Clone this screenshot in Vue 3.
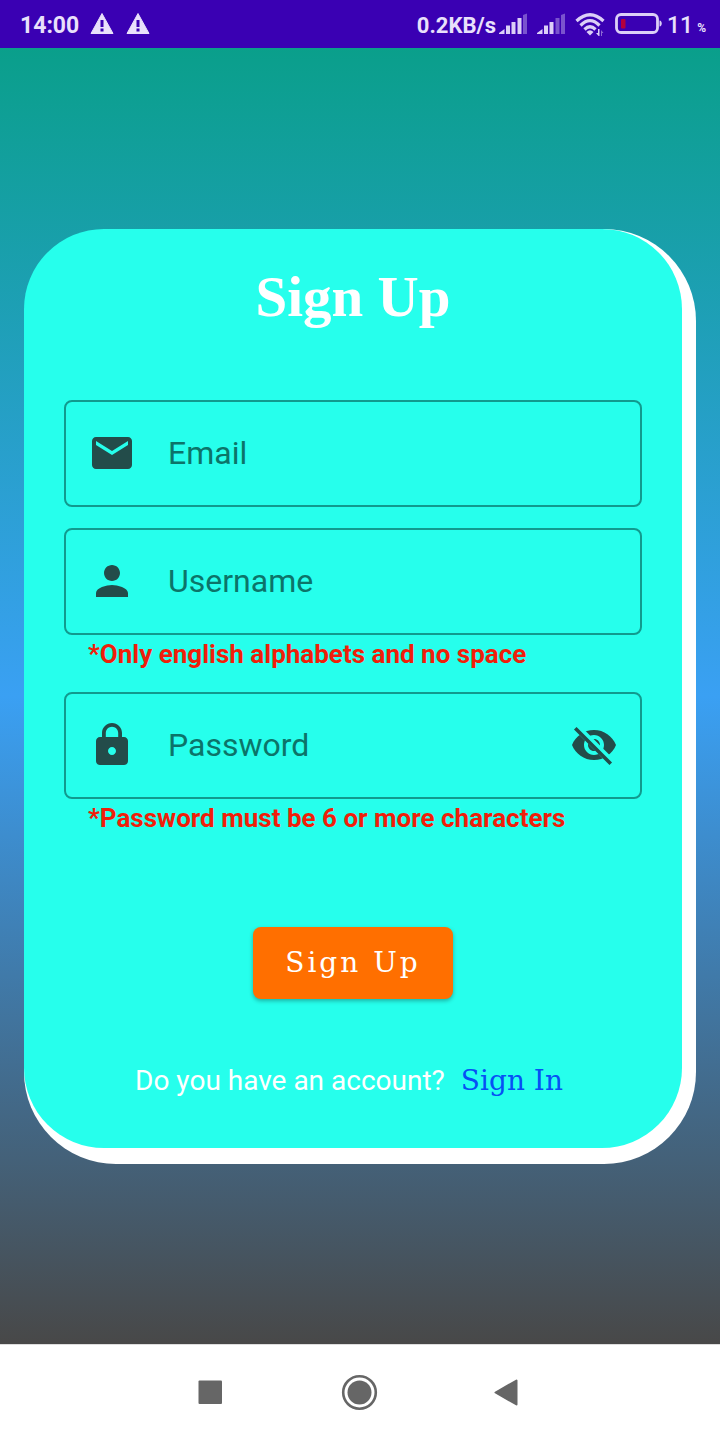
<script setup>
import { ref } from 'vue'

const email = ref('')
const username = ref('')
const password = ref('')
const showPassword = ref(false)
</script>

<template>
  <div class="screen">
    <header class="status">
      <div class="status-group left">
        <span class="clock">14:00</span>
        <svg v-for="n in 2" :key="n" class="warn" width="24" height="24" viewBox="0 0 24 24" aria-hidden="true">
          <path d="M12 1.500 23 21.500H1z" fill="#e9e0fb" stroke="#e9e0fb" stroke-linejoin="round" />
          <path d="M10.500 8h3v7h-3zM10.500 16.500h3v3h-3z" fill="#3a00b3" />
        </svg>
      </div>
      <div class="status-group right">
        <span class="speed">0.2KB/s</span>
        <svg class="signal" width="28" height="24" viewBox="0 0 28 24" aria-hidden="true">
          <g fill="#dccff7">
            <path d="M0 22v-1l5.500-4v5zM7 13.500h4V22H7zM12.500 10h4v12h-4zM18.500 6h4v16h-4z" />
            <path d="M24 3 28 1.500V22h-4z" opacity=".4" />
          </g>
        </svg>
        <svg class="signal" width="28" height="24" viewBox="0 0 28 24" aria-hidden="true">
          <g fill="#dccff7">
            <path d="M0 22v-1l5.500-4v5zM7 13.500h4V22H7zM12.500 10h4v12h-4z" />
            <path d="M18.500 6h4v16h-4zM24 3 28 1.500V22h-4z" opacity=".4" />
          </g>
        </svg>
        <svg class="wifi" width="30" height="24" viewBox="0 0 30 24" aria-hidden="true">
          <g fill="none" stroke="#dccff7" stroke-width="3.200">
            <path d="M1.500 9Q15-3.500 28.500 9" />
            <path d="M5.500 13.500Q15 4 24.500 13.500" />
            <path d="M9.500 17.500Q15 12 20.500 17.500" />
          </g>
          <path d="M11.500 20Q15 16.500 18.500 20L15 23.500z" fill="#dccff7" />
          <path d="M21 21h2v-4h1.500v8z" fill="#dccff7" />
          <path d="M26 18l2.500 3H27v3h-1z" fill="#8b68d3" />
        </svg>
        <svg class="battery" width="48" height="24" viewBox="0 0 48 24" aria-hidden="true">
          <rect x="1.500" y="2.500" width="41" height="18" rx="4.500" fill="none" stroke="#dccff7" stroke-width="2.800" />
          <rect x="6" y="7" width="4.500" height="9.500" rx="1" fill="#b3003c" />
          <path d="M44.500 8.500c3 0 3 6 0 6z" fill="#dccff7" />
        </svg>
        <span class="level">11</span>
        <span class="percent">%</span>
      </div>
    </header>

    <main class="stage">
      <div class="card">
        <form class="panel" @submit.prevent>
          <h1>Sign Up</h1>

          <div class="fields">
            <div class="field">
              <svg width="48" height="48" viewBox="0 0 24 24" aria-hidden="true">
                <path d="M20 4H4c-1.100 0-1.990.9-1.990 2L2 18c0 1.100.9 2 2 2h16c1.100 0 2-.9 2-2V6c0-1.100-.9-2-2-2zm0 4l-8 5-8-5V6l8 5 8-5v2z" />
              </svg>
              <input v-model="email" type="email" placeholder="Email" aria-label="Email" />
            </div>

            <div>
              <div class="field">
                <svg width="48" height="48" viewBox="0 0 24 24" aria-hidden="true">
                  <path d="M12 12c2.210 0 4-1.790 4-4s-1.790-4-4-4-4 1.790-4 4 1.790 4 4 4zm0 2c-2.670 0-8 1.340-8 4v2h16v-2c0-2.660-5.330-4-8-4z" />
                </svg>
                <input v-model="username" type="text" placeholder="Username" aria-label="Username" aria-describedby="username-hint" />
              </div>
              <p id="username-hint" class="hint">*Only english alphabets and no space</p>
            </div>

            <div>
              <div class="field">
                <svg width="48" height="48" viewBox="0 0 24 24" aria-hidden="true">
                  <path d="M18 8h-1V6c0-2.760-2.240-5-5-5S7 3.240 7 6v2H6c-1.100 0-2 .9-2 2v10c0 1.100.9 2 2 2h12c1.100 0 2-.9 2-2V10c0-1.100-.9-2-2-2zm-6 9c-1.100 0-2-.9-2-2s.9-2 2-2 2 .9 2 2-.9 2-2 2zm3.100-9H8.900V6c0-1.710 1.390-3.100 3.100-3.100s3.100 1.390 3.100 3.100v2z" />
                </svg>
                <input v-model="password" :type="showPassword ? 'text' : 'password'" placeholder="Password" aria-label="Password" aria-describedby="password-hint" />
                <button type="button" class="toggle" aria-label="Show password" :aria-pressed="showPassword" @click="showPassword = !showPassword">
                  <svg width="48" height="48" viewBox="0 0 24 24" aria-hidden="true">
                    <clipPath id="eye-clip">
                      <path d="M2 4.270 19.730 22 22.270 19.460 4.540 1.730V1H23V23H1V4.270Z" />
                    </clipPath>
                    <path :clip-path="showPassword ? null : 'url(#eye-clip)'" d="M12 4.500C7 4.500 2.730 7.610 1 12c1.730 4.390 6 7.500 11 7.500s9.270-3.110 11-7.500c-1.730-4.390-6-7.500-11-7.500zM12 17c-2.760 0-5-2.240-5-5s2.240-5 5-5 5 2.240 5 5-2.240 5-5 5zm0-8c-1.660 0-3 1.340-3 3s1.340 3 3 3 3-1.340 3-3-1.340-3-3-3z" />
                    <path v-if="!showPassword" d="M3.270 4.270 19.740 20.740" fill="none" stroke="#234c4a" stroke-width="1.800" stroke-linecap="square" />
                  </svg>
                </button>
              </div>
              <p id="password-hint" class="hint">*Password must be 6 or more characters</p>
            </div>
          </div>

          <button type="submit" class="submit">Sign Up</button>

          <p class="switch">
            <span>Do you have an account?</span>
            <a href="#">Sign In</a>
          </p>
        </form>
      </div>
    </main>

    <nav class="navbar">
      <button type="button" aria-label="Recent apps">
        <svg width="36" height="36" viewBox="0 0 36 36"><rect x="4.500" y="5.500" width="23.500" height="23.500" rx="1" /></svg>
      </button>
      <button type="button" aria-label="Home">
        <svg width="36" height="36" viewBox="0 0 36 36">
          <circle cx="17.500" cy="17.500" r="16.300" fill="none" stroke="#666" stroke-width="2.600" />
          <circle cx="17.500" cy="17.500" r="12" />
        </svg>
      </button>
      <button type="button" aria-label="Back">
        <svg width="36" height="36" viewBox="0 0 36 36"><path d="M5.500 17.500 26.500 5.500V29.500Z" stroke="#666" stroke-width="2" stroke-linejoin="round" /></svg>
      </button>
    </nav>
  </div>
</template>

<style>
body {
  margin: 0;
}
</style>

<style scoped>
.screen {
  min-height: 100vh;
  display: flex;
  flex-direction: column;
  font-family: Roboto, "Liberation Sans", sans-serif;
}

button {
  font: inherit;
  border: 0;
  padding: 0;
  background: none;
  cursor: pointer;
}

svg {
  display: block;
  flex: none;
}

.status {
  height: 48px;
  display: flex;
  justify-content: space-between;
  align-items: center;
  padding: 0 14px 0 20px;
  background: #3a00b3;
  color: #e9e0fb;
  font-size: 23px;
  font-weight: 700;
}

.status-group {
  display: flex;
  align-items: center;
}

.left {
  gap: 12px;
}

.right {
  gap: 10px;
}

.clock,
.speed,
.level {
  line-height: 28px;
  padding-top: 3px;
}

.clock {
  margin-right: -1px;
}

.speed {
  font-size: 22px;
  margin-right: -7px;
}

.level {
  font-weight: 500;
  margin-left: -6px;
}

.percent {
  font-size: 12px;
  margin-left: -6px;
  padding-top: 8px;
}

.stage {
  flex: 1;
  display: flex;
  align-items: center;
  padding: 24px;
  background: linear-gradient(#0a9f8b, #3aa0f3 50%, #484848);
}

.card {
  flex: 1;
  min-width: 0;
  padding: 0 14px 16px 0;
  border-radius: 92px;
  background: #fff;
}

.panel {
  display: flex;
  flex-direction: column;
  align-items: center;
  padding: 32px 40px 47px;
  border-radius: 80px;
  background: #26ffec;
}

h1 {
  margin: 0 0 67px;
  font-family: "Liberation Serif", serif;
  font-size: 57px;
  font-weight: 700;
  line-height: 72px;
  color: #fff;
}

.fields {
  align-self: stretch;
  display: flex;
  flex-direction: column;
  gap: 21px;
}

.field {
  height: 107px;
  box-sizing: border-box;
  display: flex;
  align-items: center;
  padding: 0 22px;
  border: 2px solid #119a8e;
  border-radius: 8px;
}

.field svg {
  fill: #234c4a;
}

.field input {
  flex: 1;
  min-width: 0;
  height: 100%;
  margin-left: 32px;
  padding: 0;
  border: 0;
  outline: 0;
  background: transparent;
  font: inherit;
  font-size: 32px;
  color: #234c4a;
}

.field input::placeholder {
  color: #0c7469;
  opacity: 1;
}

.hint {
  margin: 0;
  padding: 4px 24px 2px;
  font-size: 26px;
  font-weight: 700;
  line-height: 30px;
  color: #f01e0a;
}

.submit {
  height: 72px;
  margin-top: 92px;
  padding: 0 32px;
  border-radius: 8px;
  background: #ff6f00;
  box-shadow: 0 2px 4px rgba(0, 0, 0, 0.3);
  font-family: "DejaVu Serif", serif;
  font-size: 28px;
  letter-spacing: 3px;
  color: #fff;
}

.switch {
  display: flex;
  flex-wrap: wrap;
  justify-content: center;
  align-items: baseline;
  gap: 8px;
  margin: 62px 0 0;
  font-size: 28px;
  line-height: 40px;
  color: #fff;
}

.switch a {
  padding: 0 8px;
  font-family: "DejaVu Serif", serif;
  color: #0650f5;
  text-decoration: none;
}

.navbar {
  height: 96px;
  box-sizing: border-box;
  display: flex;
  justify-content: center;
  align-items: center;
  gap: 112px;
  border-top: 1px solid #ddd;
  background: #fff;
}

.navbar svg {
  fill: #666;
  overflow: visible;
}
</style>
